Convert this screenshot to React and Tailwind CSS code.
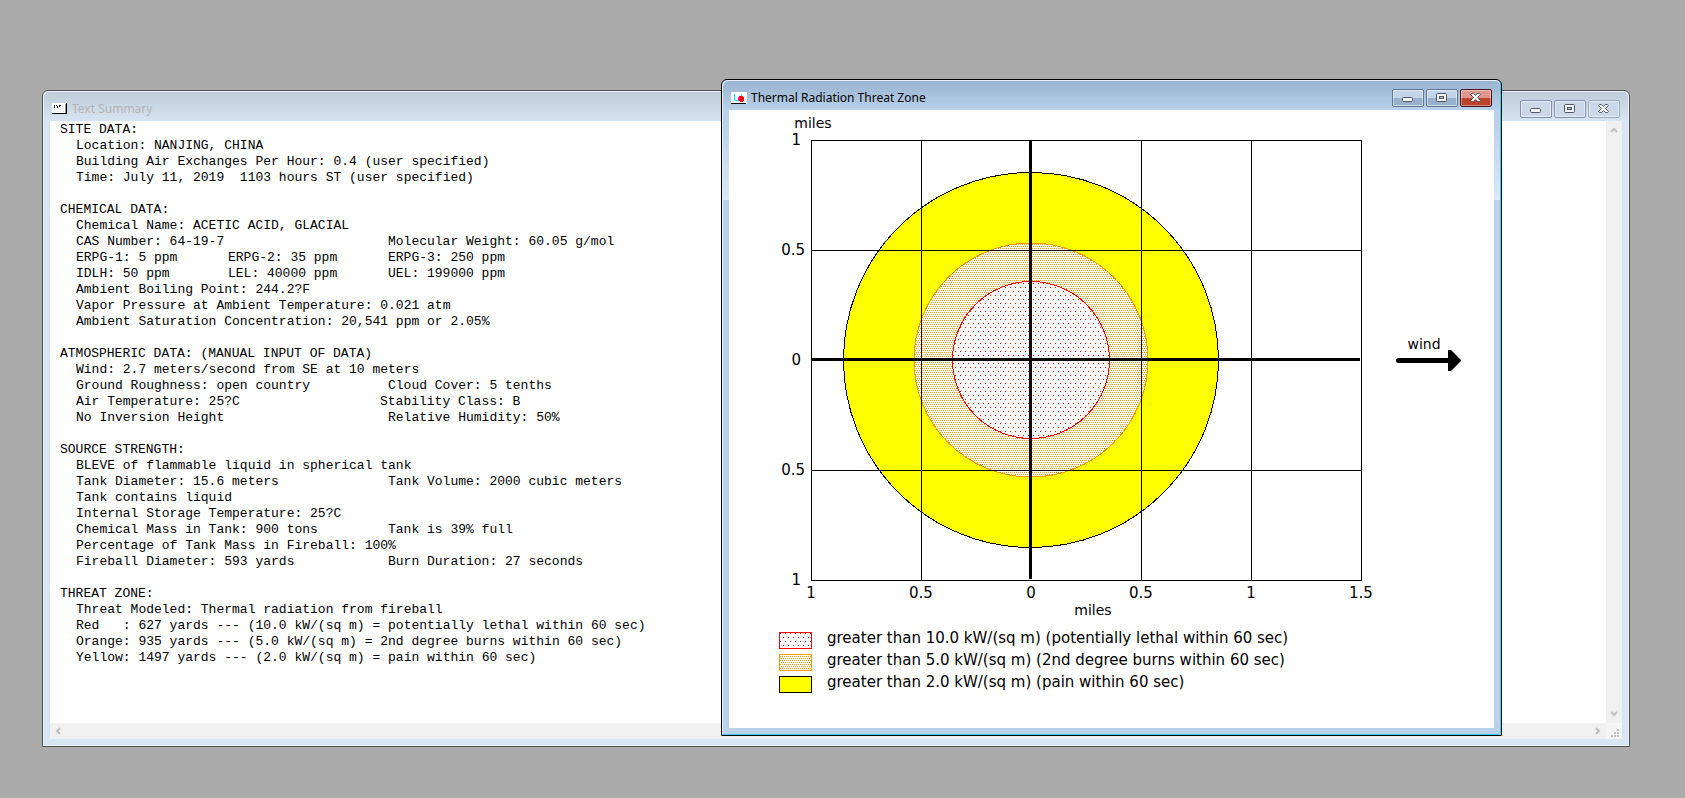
import clsx from 'clsx';

// A line is either plain text or a list of cells, one for each column
const summary = [
  {
    title: 'SITE DATA:',
    lines: [
      'Location: NANJING, CHINA',
      'Building Air Exchanges Per Hour: 0.4 (user specified)',
      'Time: July 11, 2019  1103 hours ST (user specified)',
    ],
  },
  {
    title: 'CHEMICAL DATA:',
    lines: [
      'Chemical Name: ACETIC ACID, GLACIAL',
      ['CAS Number: 64-19-7', 'Molecular Weight: 60.05 g/mol'],
      ['ERPG-1: 5 ppm', 'ERPG-2: 35 ppm', 'ERPG-3: 250 ppm'],
      ['IDLH: 50 ppm', 'LEL: 40000 ppm', 'UEL: 199000 ppm'],
      'Ambient Boiling Point: 244.2?F',
      'Vapor Pressure at Ambient Temperature: 0.021 atm',
      'Ambient Saturation Concentration: 20,541 ppm or 2.05%',
    ],
  },
  {
    title: 'ATMOSPHERIC DATA: (MANUAL INPUT OF DATA)',
    lines: [
      'Wind: 2.7 meters/second from SE at 10 meters',
      ['Ground Roughness: open country', 'Cloud Cover: 5 tenths'],
      { width: 'w-[304px]', cells: ['Air Temperature: 25?C', 'Stability Class: B'] },
      ['No Inversion Height', 'Relative Humidity: 50%'],
    ],
  },
  {
    title: 'SOURCE STRENGTH:',
    lines: [
      'BLEVE of flammable liquid in spherical tank',
      ['Tank Diameter: 15.6 meters', 'Tank Volume: 2000 cubic meters'],
      'Tank contains liquid',
      'Internal Storage Temperature: 25?C',
      ['Chemical Mass in Tank: 900 tons', 'Tank is 39% full'],
      'Percentage of Tank Mass in Fireball: 100%',
      ['Fireball Diameter: 593 yards', 'Burn Duration: 27 seconds'],
    ],
  },
  {
    title: 'THREAT ZONE:',
    lines: [
      'Threat Modeled: Thermal radiation from fireball',
      'Red   : 627 yards --- (10.0 kW/(sq m) = potentially lethal within 60 sec)',
      'Orange: 935 yards --- (5.0 kW/(sq m) = 2nd degree burns within 60 sec)',
      'Yellow: 1497 yards --- (2.0 kW/(sq m) = pain within 60 sec)',
    ],
  },
];

const legend = [
  { fill: 'url(#red-dots)', stroke: '#ff0000', label: 'greater than 10.0 kW/(sq m) (potentially lethal within 60 sec)' },
  { fill: 'url(#orange-dots)', stroke: '#ff9900', label: 'greater than 5.0 kW/(sq m) (2nd degree burns within 60 sec)' },
  { fill: '#ffff00', stroke: '#000000', label: 'greater than 2.0 kW/(sq m) (pain within 60 sec)' },
];

const Glyph = ({ children }) => (
  <svg className="w-3 h-[10px]" viewBox="0 0 12 10" fill="#f4f4f4" stroke="#535666" aria-hidden="true">
    {children}
  </svg>
);

const MinimizeGlyph = () => (
  <Glyph>
    <rect x="0.5" y="4.5" width="10" height="4" rx="1" />
  </Glyph>
);

const MaximizeGlyph = () => (
  <Glyph>
    <rect x="0.5" y="0.5" width="10" height="8" rx="1" />
    <rect x="3.5" y="3.5" width="4" height="2" fill="#a9c1dc" />
  </Glyph>
);

const CloseGlyph = () => (
  <Glyph>
    <path d="M1.5 0.5H3.5L5.5 2.5L7.5 0.5H9.5L10.5 1.5L7.5 4.5L10.5 7.5L9.5 8.5H7.5L5.5 6.5L3.5 8.5H1.5L0.5 7.5L3.5 4.5L0.5 1.5Z" />
  </Glyph>
);

const WindowButtons = ({ active }) => {
  const base = 'w-8 h-[18px] rounded-xs border flex items-center justify-center';
  const normal = active
    ? 'border-[#5f7593] bg-linear-to-b from-[#c3d5e9] from-50% to-[#98b2cd] to-50% inset-ring inset-ring-white/50'
    : 'border-[#8391b0] bg-[#cbd8e8] inset-ring inset-ring-white/50';
  const close = active
    ? 'border-[#4c1420] bg-linear-to-b from-[#e0988d] from-50% to-[#bb4129] to-50% inset-ring inset-ring-white/40'
    : 'border-[#9dabbd] bg-[#cbd8e8] inset-ring inset-ring-white/50';

  return (
    <div className="flex gap-[2px]">
      <button type="button" aria-label="Minimize" className={clsx(base, normal)}><MinimizeGlyph /></button>
      <button type="button" aria-label="Maximize" className={clsx(base, normal)}><MaximizeGlyph /></button>
      <button type="button" aria-label="Close" className={clsx(base, close)}><CloseGlyph /></button>
    </div>
  );
};

const TextIcon = () => (
  <svg className="w-4 h-3" viewBox="0 0 16 12" shapeRendering="crispEdges" aria-hidden="true">
    <rect width="15" height="11" fill="#fff" />
    <path d="M14 0h1v11h-1zM0 10h15v1H0z" fill="#000" />
    <path d="M13 1h1v9h-1z" fill="#999" />
    <path d="M2 2h1v3H2zM4 2h1v1H4zM5 3h1v2H5zM7 2h2v1H7zM7 3h1v1H7z" fill="#000" />
  </svg>
);

const ZoneIcon = () => (
  <svg className="w-4 h-3" viewBox="0 0 16 12" shapeRendering="crispEdges" aria-hidden="true">
    <rect width="16" height="12" fill="#fff" />
    <path d="M3 2h1v6h4v1H3zM10 2h1v3h-1z" fill="#00ffff" />
    <path d="M9 4h3v1h1v4h-1v1H9V9H8V5h1z" fill="#ff0000" />
    <path d="M8 4h1v1H8zM7 5h1v4H7z" fill="#ff00ff" />
    <path d="M0 11h15v1H0z" fill="#000" />
  </svg>
);

const Arrow = ({ className }) => (
  <svg className={clsx('w-2 h-2', className)} viewBox="0 0 8 8" aria-hidden="true">
    <path d="M1 6L4 3L7 6" fill="none" stroke="#bfbfbf" strokeWidth="2" />
  </svg>
);

const TitleBar = ({ icon: Icon, title, active }) => (
  <header
    className={clsx(
      'flex h-[29px] shrink-0 items-start justify-between -mx-[6px] mt-px px-2 pt-2 rounded-t-md bg-linear-to-b',
      active ? 'from-[#99b4d1] to-[#b9d1ea]' : 'from-[#bfcddb] to-[#d7e4f2]'
    )}
  >
    <div className="flex items-center gap-1 pt-px">
      <Icon />
      <h2 className={clsx("font-['Noto_Sans',sans-serif] text-[12px] leading-4", active ? 'text-black' : 'text-[#b4b4b4]')}>
        {title}
      </h2>
    </div>
    <WindowButtons active={active} />
  </header>
);

const SummaryLine = ({ line }) => {
  if (typeof line === 'string') return <p>{line}</p>;

  const cells = Array.isArray(line) ? line : line.cells;
  const width = line.width || (cells.length === 3 ? 'w-[152px]' : 'w-[312px]');
  return (
    <p className="flex">
      {cells.map((cell, index) => (
        <span
          key={cell}
          className={clsx('shrink-0', index === 0 && width, index === 1 && cells.length === 3 && 'w-[160px]')}
        >
          {cell}
        </span>
      ))}
    </p>
  );
};

const TextSummary = () => (
  <section className="absolute top-[90px] bottom-[51px] left-[42px] right-[55px] flex flex-col rounded-t-md border border-[#4f4f4f] bg-[#d7e4f2] px-[7px] pb-[7px] inset-ring inset-ring-white/60">
    <TitleBar icon={TextIcon} title="Text Summary" />
    <div className="flex min-h-0 flex-1 bg-white">
      <div className="flex flex-1 flex-col gap-4 overflow-hidden whitespace-pre pl-[10px] pt-px font-['Liberation_Mono',monospace] text-[13px] leading-4 text-black">
        {summary.map(({ title, lines }) => (
          <section key={title}>
            <h3>{title}</h3>
            <div className="pl-4">
              {lines.map((line, index) => (
                <SummaryLine key={index} line={line} />
              ))}
            </div>
          </section>
        ))}
      </div>
      <div className="flex w-4 flex-col items-center justify-between bg-[#f0f0f0] py-[5px]">
        <Arrow />
        <Arrow className="rotate-180" />
      </div>
    </div>
    <div className="flex h-4 shrink-0 bg-[#f0f0f0]">
      <div className="flex flex-1 items-center justify-between px-1">
        <Arrow className="-rotate-90" />
        <Arrow className="rotate-90" />
      </div>
      <svg className="w-4 h-4 bg-[#f5f5f5]" viewBox="0 0 16 16" aria-hidden="true">
        <path d="M5 12h2v2H5zM8 12h2v2H8zM11 12h2v2h-2zM8 9h2v2H8zM11 9h2v2h-2zM11 6h2v2h-2z" fill="#bfbfbf" />
      </svg>
    </div>
  </section>
);

const ThreatChart = () => (
  <svg
    className="block w-full h-auto font-['DejaVu_Sans',sans-serif]"
    viewBox="0 0 765 510"
    role="img"
    aria-label="Thermal radiation threat zone"
  >
    <defs>
      <pattern id="red-dots" width="10" height="8" patternUnits="userSpaceOnUse">
        <rect width="10" height="8" fill="#fff" />
        <path d="M1 1h1v1H1zM6 1h1v1H6zM4 5h1v1H4zM9 5h1v1H9z" fill="#ff0000" shapeRendering="crispEdges" />
      </pattern>
      <pattern id="orange-dots" width="4" height="4" patternUnits="userSpaceOnUse">
        <rect width="4" height="4" fill="#fff" />
        <path d="M0 0h1v1H0zM2 0h1v1H2zM1 2h1v1H1zM3 2h1v1H3z" fill="#ff9900" shapeRendering="crispEdges" />
      </pattern>
    </defs>
    <g shapeRendering="crispEdges" fill="none" stroke="#000">
      <circle cx="302" cy="250" r="187.5" fill="#ffff00" />
      <circle cx="302" cy="250" r="117" fill="url(#orange-dots)" stroke="#ff9900" />
      <circle cx="302" cy="250" r="78.5" fill="url(#red-dots)" stroke="#ff0000" />
      <rect x="82.5" y="30.5" width="550" height="440" />
      <path d="M192.5 30v440M412.5 30v440M522.5 30v440M82 140.5h550M82 360.5h550" />
      <path d="M301.5 30v439M82 249.5h549" strokeWidth="3" />
    </g>
    <g className="text-[15px]" textAnchor="end">
      <text x="72" y="35">1</text>
      <text x="76" y="145">0.5</text>
      <text x="72" y="255">0</text>
      <text x="76" y="365">0.5</text>
      <text x="72" y="475">1</text>
    </g>
    <g className="text-[15px]" textAnchor="middle">
      <text x="82" y="488">1</text>
      <text x="192" y="488">0.5</text>
      <text x="302" y="488">0</text>
      <text x="412" y="488">0.5</text>
      <text x="522" y="488">1</text>
      <text x="632" y="488">1.5</text>
    </g>
    <g className="text-[14px]" textAnchor="middle">
      <text x="84" y="18">miles</text>
      <text x="364" y="505">miles</text>
      <text x="695" y="239">wind</text>
    </g>
    <path d="M669.5 250.5h54" stroke="#000" strokeWidth="5" strokeLinecap="round" />
    <path d="M719 240h3l10 10v1l-10 10h-3z" />
  </svg>
);

const ThreatZone = () => (
  <section className="absolute top-[79px] left-[721px] w-[781px] max-w-full rounded-t-md border border-black px-[7px] pb-[7px] bg-[linear-gradient(#b9d1ea_40px,#dce8f5_120px,#b9d1ea_120px)] shadow-[inset_-1px_-1px_0_#2fd5ef,inset_1px_1px_0_#e4f0fb]">
    <TitleBar icon={ZoneIcon} title="Thermal Radiation Threat Zone" active />
    <div className="bg-white pb-[35px]">
      <ThreatChart />
      <ul className="flex flex-col pl-[50px] pt-[7px]">
        {legend.map(({ fill, stroke, label }) => (
          <li key={label} className="flex h-[22px] gap-[14px] font-['DejaVu_Sans',sans-serif] text-[15px] leading-[22px]">
            <svg className="mt-[5px] h-[17px] w-[34px] shrink-0" viewBox="0 0 34 17" shapeRendering="crispEdges" aria-hidden="true">
              <rect x="0.5" y="0.5" width="32" height="16" fill={fill} stroke={stroke} />
            </svg>
            <span>{label}</span>
          </li>
        ))}
      </ul>
    </div>
  </section>
);

export default function App() {
  return (
    <main className="relative min-h-screen overflow-hidden bg-[#ababab]">
      <TextSummary />
      <ThreatZone />
    </main>
  );
}
